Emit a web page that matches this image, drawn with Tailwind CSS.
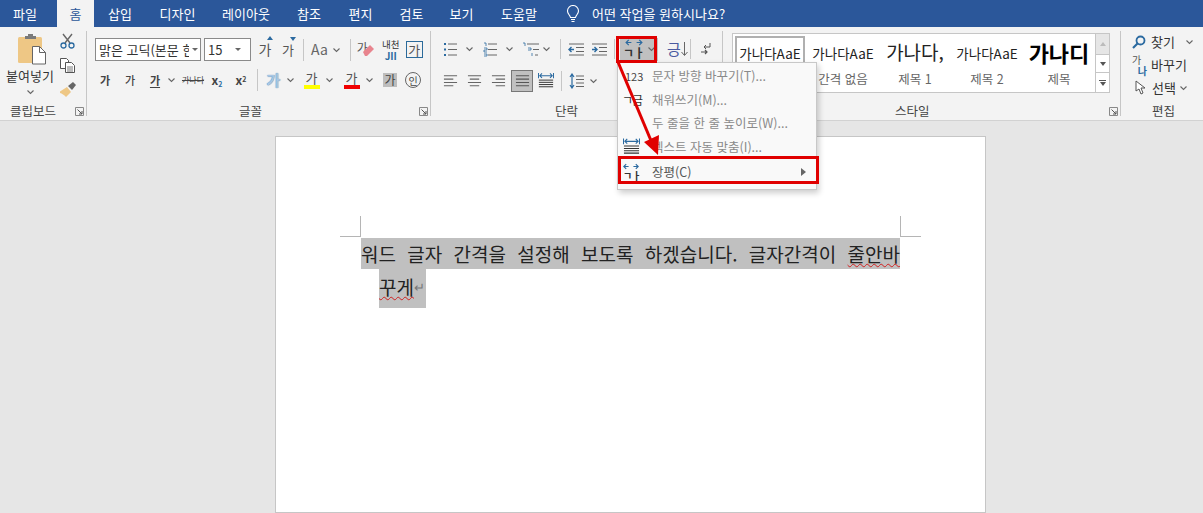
<!DOCTYPE html>
<html lang="ko">
<head>
<meta charset="UTF-8">
<title>Word</title>
<script src="https://cdn.jsdelivr.net/npm/@tailwindcss/browser@4"></script>
</head>
<body class="w-[1203px] h-[513px] overflow-hidden bg-[#e6e6e6] font-['Noto_Sans_CJK_KR','Liberation_Sans',sans-serif] text-[#444] relative">

<svg class="hidden">
  <symbol id="chev" viewBox="0 0 9 6"><path d="M1.5 1.5 4.5 4.5 7.5 1.5" fill="none" stroke="#666" stroke-width="1.1"/></symbol>
  <symbol id="launch" viewBox="0 0 9 9"><path d="M.5.5h8v8h-8z" fill="none" stroke="#888"/><path d="M2.5 2.5 7 7M7 4v3H4" fill="none" stroke="#555"/></symbol>
  <symbol id="aleft" viewBox="0 0 16 14"><path d="M1 1.5h14M1 5h10M1 8.500h14M1 12h10" stroke="#666" stroke-width="1.1"/></symbol>
  <symbol id="acenter" viewBox="0 0 16 14"><path d="M1 1.500h14M3 5h10M1 8.500h14M3 12h10" stroke="#666" stroke-width="1.1"/></symbol>
  <symbol id="aright" viewBox="0 0 16 14"><path d="M1 1.500h14M5 5h10M1 8.500h14M5 12h10" stroke="#666" stroke-width="1.1"/></symbol>
  <symbol id="ajust" viewBox="0 0 16 14"><path d="M1 1.500h14M1 5h14M1 8.500h14M1 12h14" stroke="#555" stroke-width="1.1"/></symbol>
  <symbol id="adist" viewBox="0 0 18 18"><path d="M.5 0v6M17.500 0v6M2 3h14M4.500 .5 2 3l2.500 2.500M13.500 .5 16 3l-2.500 2.500" fill="none" stroke="#2b6aa0" stroke-width="1.200"/><path d="M1 8h16M1 10.500h16M1 13h16M1 15.500h16" stroke="#333" stroke-width="1.100"/></symbol>
  <symbol id="spread" viewBox="0 0 20 8"><path d="M1 4h6M4 1 1 4l3 3M13 4h6M16 1l3 3-3 3" fill="none" stroke="#2b6aa0" stroke-width="1.400"/></symbol>
</svg>

<!-- 탭 -->
<nav class="flex items-center h-[27px] bg-[#2b579a] text-white text-[13px]">
  <span class="w-[50px] text-center">파일</span>
  <span class="w-[37px] ml-[7px] h-full flex items-center justify-center bg-[#f3f3f3] text-[#2b579a]">홈</span>
  <span class="w-[52px] text-center">삽입</span>
  <span class="w-[63px] text-center">디자인</span>
  <span class="w-[74px] text-center">레이아웃</span>
  <span class="w-[52px] text-center">참조</span>
  <span class="w-[51px] text-center">편지</span>
  <span class="w-[51px] text-center">검토</span>
  <span class="w-[49px] text-center">보기</span>
  <span class="w-[66px] text-center">도움말</span>
  <svg class="ml-[13px] w-[16px] h-[18px]" viewBox="0 0 16 18" fill="none" stroke="#fff" stroke-width="1.100"><path d="M5.500 12.500C5 10 2.500 9 2.500 6a5.500 5.500 0 0 1 11 0c0 3-2.500 4-3 6.500z"/><path d="M6 14.500h4M6.500 16.500h3"/></svg>
  <span class="ml-[11px]">어떤 작업을 원하시나요?</span>
</nav>

<!-- 리본 -->
<section class="flex h-[94px] pt-[4px] bg-[#f3f3f3] border-b border-[#d2d2d2] text-[12px]">

  <!-- 클립보드 -->
  <div class="w-[87px] h-[85px] border-r border-[#c6c6c6] flex flex-col relative">
    <div class="flex">
      <div class="w-[60px] flex flex-col items-center">
        <svg class="w-[28px] h-[31px] ml-[4px] mt-[3px]" viewBox="0 0 28 31">
          <rect x="0" y="3" width="24" height="26" rx="1.500" fill="#eec785"/>
          <path d="M7 5V2h3V0h5v2h3v3z" fill="#7a7a7a"/>
          <path d="M14.500 12.500h7l6 6V30h-13z" fill="#fff" stroke="#666"/>
          <path d="M21.500 12.500v6h6" fill="none" stroke="#666"/>
        </svg>
        <span class="text-[13px] leading-[16px] mt-[3px] text-[#333]">붙여넣기</span>
        <svg class="w-[9px] h-[6px] mt-[5px]"><use href="#chev"/></svg>
      </div>
      <div class="flex flex-col w-[16px] gap-[9px] pt-[2px]">
        <svg class="w-[15px] h-[16px]" viewBox="0 0 15 16" fill="none"><path d="M3 1l7 9M12 1 5 10" stroke="#666" stroke-width="1.400"/><circle cx="3.500" cy="12.500" r="2.500" stroke="#2b6aa0" stroke-width="1.300"/><circle cx="11.500" cy="12.500" r="2.500" stroke="#2b6aa0" stroke-width="1.300"/></svg>
        <svg class="w-[15px] h-[15px]" viewBox="0 0 15 15" fill="#fff" stroke="#555"><path d="M.5.500h6l2 2v8h-8z"/><path d="M5.500 4.500h6l3 3v7h-9z"/><path d="M7 9h6M7 11h6M7 13h6" stroke-width=".8"/></svg>
        <svg class="w-[17px] h-[15px] -ml-[1px]" viewBox="0 0 17 15"><path d="M1 9.500 8 5l4 5-5 5C5 13 3 11.500 1 11z" fill="#eec785"/><path d="M9 4l5-4 3 3-4 5z" fill="#666"/></svg>
      </div>
    </div>
    <div class="mt-auto -mb-[2px] h-[14px] leading-[14px] pl-[10px] text-[12.500px]">클립보드</div>
    <svg class="absolute right-[2px] bottom-[0px] w-[9px] h-[9px]"><use href="#launch"/></svg>
  </div>

  <!-- 글꼴 -->
  <div class="w-[344px] h-[85px] border-r border-[#c6c6c6] flex flex-col relative pt-[7px]">
    <div class="flex items-center h-[23px] pl-[8px]">
      <div class="w-[106px] h-[23px] bg-white border border-[#8a8a8a] flex items-center pl-[3px] text-[13px] text-[#333] whitespace-nowrap">
        <span class="w-[90px] overflow-hidden">맑은 고딕(본문 한</span><span class="ml-[3px] border-x-[3px] border-t-[3px] border-x-transparent border-t-[#666]"></span>
      </div>
      <div class="w-[47px] h-[23px] ml-[3px] bg-white border border-[#8a8a8a] flex items-center justify-between pl-[3px] pr-[9px] text-[13px] text-[#333]">
        15<span class="border-x-[3px] border-t-[3px] border-x-transparent border-t-[#666]"></span>
      </div>
      <span class="ml-[7px] w-[14px] text-[14px] text-[#555] relative text-center">가<span class="absolute -top-[3px] right-[-1px] border-x-[3px] border-b-[4px] border-x-transparent border-b-[#2b6aa0]"></span></span>
      <span class="ml-[9px] w-[14px] text-[13px] text-[#555] relative text-center">가<span class="absolute -top-[3px] right-[-1px] border-x-[3px] border-t-[4px] border-x-transparent border-t-[#2b6aa0]"></span></span>
      <span class="ml-[8px] w-px h-[22px] bg-[#c6c6c6]"></span>
      <span class="ml-[7px] text-[14px] text-[#666]">Aa</span>
      <svg class="ml-[4px] w-[9px] h-[6px]"><use href="#chev"/></svg>
      <span class="ml-[9px] w-px h-[22px] bg-[#c6c6c6]"></span>
      <span class="ml-[6px] w-[18px] h-[18px] relative text-[12px] leading-[14px] text-[#555]">가<svg class="absolute left-[5px] top-[3px] w-[13px] h-[13px]" viewBox="0 0 13 13"><path d="M1 8l7-7 4 4-7 7H3z" fill="#e8848e"/></svg></span>
      <span class="ml-[7px] w-[18px] flex flex-col items-center text-[9.500px] leading-[11px] text-[#333]">내천<span class="text-[#2b6aa0] font-bold text-[10px] leading-[11px]">JII</span></span>
      <span class="ml-[6px] w-[17px] h-[17px] border border-[#2b6a9a] flex items-center justify-center text-[13px] text-[#555]">가</span>
    </div>
    <div class="flex items-center h-[22px] mt-[8px] pl-[6px] text-[11px] text-[#444]">
      <span class="w-[24px] text-center font-bold">가</span>
      <span class="w-[24px] ml-[1px] text-center font-medium">가</span>
      <span class="w-[24px] ml-[1px] text-center font-bold underline underline-offset-2">가</span>
      <svg class="w-[9px] h-[6px]"><use href="#chev"/></svg>
      <span class="w-[24px] ml-[5px] text-center line-through text-[8px] whitespace-nowrap">가나다</span>
      <span class="w-[24px] text-center font-bold text-[12px]">x<sub class="text-[#2b6aa0] text-[7px]">2</sub></span>
      <span class="w-[24px] text-center font-bold text-[12px]">x<sup class="text-[7px]">2</sup></span>
      <span class="ml-[4px] w-px h-[22px] bg-[#c6c6c6]"></span>
      <span class="ml-[8px] w-[15px] text-center font-bold text-[15px] text-[#a9c6e4] [text-shadow:0_0_1px_#2b6aa0]">가</span>
      <svg class="ml-[5px] w-[9px] h-[6px]"><use href="#chev"/></svg>
      <span class="ml-[8px] w-[17px] h-[20px] flex flex-col items-center text-[13px] leading-[15px] text-[#555]">가<span class="w-[16px] h-[4px] bg-[#ffff00]"></span></span>
      <svg class="ml-[5px] w-[9px] h-[6px]"><use href="#chev"/></svg>
      <span class="ml-[9px] w-[17px] h-[20px] flex flex-col items-center text-[13px] leading-[15px] text-[#555]">가<span class="w-[16px] h-[4px] bg-[#f00000]"></span></span>
      <svg class="ml-[5px] w-[9px] h-[6px]"><use href="#chev"/></svg>
      <span class="ml-[9px] w-[14px] h-[14px] bg-[#bdbdbd] flex items-center justify-center text-[12px]">가</span>
      <span class="ml-[8px] w-[16px] h-[16px] rounded-full border border-[#666] flex items-center justify-center text-[10px]">인</span>
    </div>
    <div class="mt-auto -mb-[2px] h-[14px] leading-[14px] text-center text-[12.500px] pr-[16px]">글꼴</div>
    <svg class="absolute right-[2px] bottom-[0px] w-[9px] h-[9px]"><use href="#launch"/></svg>
  </div>

  <!-- 단락 -->
  <div class="w-[292px] h-[85px] border-r border-[#c6c6c6] flex flex-col relative pt-[8px]">
    <div class="flex items-center h-[20px] pl-[12px]">
      <svg class="w-[14px] h-[15px]" viewBox="0 0 14 15"><path d="M1 2h2M1 7.500h2M1 13h2" stroke="#2b6aa0" stroke-width="2"/><path d="M5 2h9M5 7.500h9M5 13h9" stroke="#666"/></svg>
      <svg class="ml-[8px] w-[9px] h-[6px]"><use href="#chev"/></svg>
      <svg class="ml-[9px] w-[14px] h-[15px]" viewBox="0 0 14 15"><path d="M1 1h2v3M1 6h3v2H1v2h3M1 12h3v2H1" fill="none" stroke="#2b6aa0" stroke-width=".8"/><path d="M5 2h9M5 7.500h9M5 13h9" stroke="#666"/></svg>
      <svg class="ml-[8px] w-[9px] h-[6px]"><use href="#chev"/></svg>
      <svg class="ml-[8px] w-[17px] h-[15px]" viewBox="0 0 17 15"><path d="M1 1h2v3M6 6h3v2H6M10 11v3" fill="none" stroke="#2b6aa0" stroke-width=".8"/><path d="M5 2h12M11 7.500h6M13 13h3" stroke="#666"/></svg>
      <svg class="ml-[3px] w-[9px] h-[6px]"><use href="#chev"/></svg>
      <span class="ml-[9px] w-px h-[20px] bg-[#c6c6c6]"></span>
      <svg class="ml-[7px] w-[16px] h-[13px]" viewBox="0 0 16 13"><path d="M6 6.500H1M3.500 4 1 6.500 3.500 9" fill="none" stroke="#2b6aa0" stroke-width="1.400"/><path d="M1 1h15M8 4.500h8M8 8.500h8M1 12h15" stroke="#666"/></svg>
      <svg class="ml-[7px] w-[16px] h-[13px]" viewBox="0 0 16 13"><path d="M1 6.500h5M3.500 4 6 6.500 3.500 9" fill="none" stroke="#2b6aa0" stroke-width="1.400"/><path d="M1 1h15M8 4.500h8M8 8.500h8M1 12h15" stroke="#666"/></svg>
      <span class="ml-[7px] w-px h-[20px] bg-[#c6c6c6]"></span>
      <span class="ml-[5px] w-[38px] h-[23px] bg-[#c0c0c0] flex items-center pl-[3px]">
        <span class="w-[22px] h-[20px] flex flex-col items-center">
          <svg class="w-[20px] h-[7px]"><use href="#spread"/></svg>
          <span class="flex text-[12px] leading-[13px] font-bold text-[#333]"><span>ㄱ</span><span>ㅏ</span></span>
        </span>
        <svg class="ml-[2px] w-[9px] h-[6px]"><use href="#chev"/></svg>
      </span>
      <span class="ml-[9px] text-[15px] leading-[18px] text-[#4a5aa0]">긍</span>
      <svg class="w-[7px] h-[16px]" viewBox="0 0 7 16" fill="none" stroke="#666"><path d="M3.500 1v13M.5 11l3 3.500 3-3.500"/></svg>
      <span class="ml-[2px] w-px h-[20px] bg-[#c6c6c6]"></span>
      <svg class="ml-[9px] w-[11px] h-[14px]" viewBox="0 0 11 14" fill="none"><path d="M10 1v4H4M6 3 4 5l2 2" stroke="#555"/><path d="M1 10h6M5 8l2 2-2 2" stroke="#555" stroke-width="1.200"/></svg>
    </div>
    <div class="flex items-center h-[22px] mt-[11px] pl-[12px]">
      <svg class="w-[15px] h-[14px]"><use href="#aleft"/></svg>
      <svg class="ml-[9px] w-[15px] h-[14px]"><use href="#acenter"/></svg>
      <svg class="ml-[9px] w-[15px] h-[14px]"><use href="#aright"/></svg>
      <span class="ml-[5px] w-[22px] h-[22px] bg-[#c0c0c0] border border-[#777] flex items-center justify-center"><svg class="w-[15px] h-[14px]"><use href="#ajust"/></svg></span>
      <svg class="ml-[5px] w-[16px] h-[16px]"><use href="#adist"/></svg>
      <span class="ml-[7px] w-px h-[20px] bg-[#c6c6c6]"></span>
      <svg class="ml-[7px] w-[15px] h-[16px]" viewBox="0 0 15 16"><path d="M3 1v14M1 4l2-3 2 3M1 12l2 3 2-3" fill="none" stroke="#2b6aa0" stroke-width="1.200"/><path d="M7 3h8M7 6.500h8M7 10h8M7 13.500h8" stroke="#666"/></svg>
      <svg class="ml-[5px] w-[9px] h-[6px]"><use href="#chev"/></svg>
    </div>
    <div class="mt-auto -mb-[2px] h-[14px] leading-[14px] text-center text-[12.500px] pr-[20px]">단락</div>
  </div>

  <!-- 스타일 -->
  <div class="w-[398px] h-[85px] border-r border-[#c6c6c6] flex flex-col relative pt-[2px]">
    <div class="ml-[9px] w-[378px] h-[60px] border border-[#c6c6c6] bg-white flex">
      <div class="flex-1 flex pl-[2px] pt-[2px] whitespace-nowrap overflow-hidden">
        <div class="w-[70px] h-[54px] border-2 border-[#b0b0b0] flex flex-col items-center overflow-hidden text-[13.500px] text-[#222] pt-[5px]">가나다AaE</div>
        <div class="w-[72px] ml-[2px] flex flex-col items-center overflow-hidden text-[13.500px] leading-[20px] text-[#222] pt-[7px]">가나다AaE<span class="mt-[7px] text-[12.500px] leading-[18px] text-[#666]">간격 없음</span></div>
        <div class="w-[72px] flex flex-col items-center overflow-hidden text-[19px] leading-[24px] text-[#222] pt-[4px]">가나다,<span class="mt-[6px] text-[12.500px] leading-[18px] text-[#666]">제목 1</span></div>
        <div class="w-[72px] flex flex-col items-center overflow-hidden text-[13.500px] leading-[20px] text-[#222] pt-[7px]">가나다AaE<span class="mt-[7px] text-[12.500px] leading-[18px] text-[#666]">제목 2</span></div>
        <div class="w-[72px] flex flex-col items-center overflow-hidden text-[22px] leading-[28px] font-bold text-black pt-[2px]">가나디<span class="mt-[4px] text-[12.500px] leading-[18px] font-normal text-[#666]">제목</span></div>
      </div>
      <div class="w-[14px] flex flex-col border-l border-[#c6c6c6]">
        <div class="h-[20px] bg-[#e6e6e6] flex items-center justify-center"><span class="border-x-[3px] border-b-[4px] border-x-transparent border-b-[#bbb]"></span></div>
        <div class="h-[19px] border-y border-[#c6c6c6] flex items-center justify-center"><span class="border-x-[3px] border-t-[4px] border-x-transparent border-t-[#555]"></span></div>
        <div class="flex-1 flex flex-col items-center justify-center gap-[1px]"><span class="w-[7px] h-px bg-[#555]"></span><span class="border-x-[3px] border-t-[4px] border-x-transparent border-t-[#555]"></span></div>
      </div>
    </div>
    <div class="mt-auto -mb-[2px] h-[14px] leading-[14px] pl-[172px] text-[12.500px]">스타일</div>
    <svg class="absolute right-[2px] bottom-[0px] w-[9px] h-[9px]"><use href="#launch"/></svg>
  </div>

  <!-- 편집 -->
  <div class="flex-1 h-[85px] flex flex-col -mt-[1px] text-[13px] text-[#333] pl-[11px]">
    <div class="flex items-center h-[23px]">
      <svg class="w-[14px] h-[14px]" viewBox="0 0 14 14" fill="none" stroke="#2b6aa0"><circle cx="8.500" cy="5.500" r="4" stroke-width="1.800"/><path d="M5.500 8.500 1 13" stroke-width="2.200"/></svg>
      <span class="ml-[5px]">찾기</span><svg class="ml-[10px] w-[9px] h-[6px]"><use href="#chev"/></svg>
    </div>
    <div class="flex items-center h-[23px]">
      <span class="w-[18px] h-[22px] flex flex-col text-[10px] leading-[11px] text-[#555]"><span>가</span><span class="text-right pr-[3px] text-[#2b6aa0] font-bold">나</span></span>
      <span class="ml-[1px]">바꾸기</span>
    </div>
    <div class="flex items-center h-[23px]">
      <svg class="ml-[3px] w-[11px] h-[15px]" viewBox="0 0 11 15" fill="#fff" stroke="#555"><path d="M1 1v10l3-2 2 5 2-1-2-5h4z"/></svg>
      <span class="ml-[6px]">선택</span><svg class="ml-[3px] w-[9px] h-[6px]"><use href="#chev"/></svg>
    </div>
    <div class="mt-auto -mb-[3px] h-[14px] leading-[14px] pl-[20px] text-[12.500px] text-[#444]">편집</div>
  </div>
</section>

<!-- 문서 -->
<main class="relative ml-[275px] mt-[15px] w-[711px] h-[377px] bg-white border border-[#c6c6c6] pt-[101px] px-[85px] text-[19px] text-[#222]">
  <span class="absolute left-[84px] top-[79px] w-px h-[20px] bg-[#b5b5b5]"></span>
  <span class="absolute left-[64px] top-[99px] w-[21px] h-px bg-[#b5b5b5]"></span>
  <span class="absolute right-[84px] top-[79px] w-px h-[20px] bg-[#b5b5b5]"></span>
  <span class="absolute right-[64px] top-[99px] w-[21px] h-px bg-[#b5b5b5]"></span>
  <p class="h-[31px] leading-[31px] bg-[#c0c0c0] text-justify [text-align-last:justify] whitespace-nowrap">워드 글자 간격을 설정해 보도록 하겠습니다. 글자간격이 <span class="underline decoration-wavy decoration-[#d02020] decoration-1">줄안바</span></p>
  <p class="ml-[18px] w-[47px] h-[39px] leading-[36px] bg-[#c0c0c0] flex"><span class="underline decoration-wavy decoration-[#d02020] decoration-1">꾸게</span><span class="text-[#777] text-[13px]">↵</span></p>
</main>

<!-- 텍스트 방향 메뉴 -->
<div class="absolute left-[617px] top-[62px] w-[200px] h-[128px] bg-[#f9f9f9] border border-[#c8c8c8] shadow-[2px_3px_6px_rgba(0,0,0,0.2)] text-[12.500px] text-[#8a8a8a] z-10 pt-[1px]">
  <div class="flex items-center h-[24px]"><span class="w-[34px] text-[#444] text-[11px] pl-[7px]">123</span>문자 방향 바꾸기(T)...</div>
  <div class="flex items-center h-[24px]"><span class="w-[34px] text-[#333] text-[12px] pl-[4px] tracking-[-1px] whitespace-nowrap">ㄱ금</span>채워쓰기(M)...</div>
  <div class="flex items-center h-[23px]"><span class="w-[34px]"></span>두 줄을 한 줄 높이로(W)...</div>
  <div class="flex items-center h-[24px]"><span class="w-[34px] pl-[5px]"><svg class="w-[17px] h-[18px]"><use href="#adist"/></svg></span>텍스트 자동 맞춤(I)...</div>
  <div class="flex items-center h-[26px] text-[#555]"><span class="w-[34px] pl-[5px] flex flex-col"><svg class="w-[16px] h-[7px]"><use href="#spread"/></svg><span class="flex text-[10px] leading-[11px] font-bold text-[#333]"><span>ㄱ</span><span>ㅏ</span></span></span>장평(C)<span class="ml-auto mr-[10px] border-y-[4px] border-l-[5px] border-y-transparent border-l-[#666]"></span></div>
</div>

<!-- 빨간 표시 -->
<div class="absolute left-[616px] top-[36px] w-[41px] h-[27px] border-[3px] border-[#e00000] z-20"></div>
<div class="absolute left-[618px] top-[156px] w-[201px] h-[28px] border-[3px] border-[#e00000] z-20"></div>
<svg class="absolute left-[610px] top-[55px] w-[60px] h-[105px] z-20" viewBox="0 0 60 105"><path d="M8 7 42 88" stroke="#e00000" stroke-width="3"/><path d="M48 100 34 87 49 80z" fill="#e00000"/></svg>

</body>
</html>
